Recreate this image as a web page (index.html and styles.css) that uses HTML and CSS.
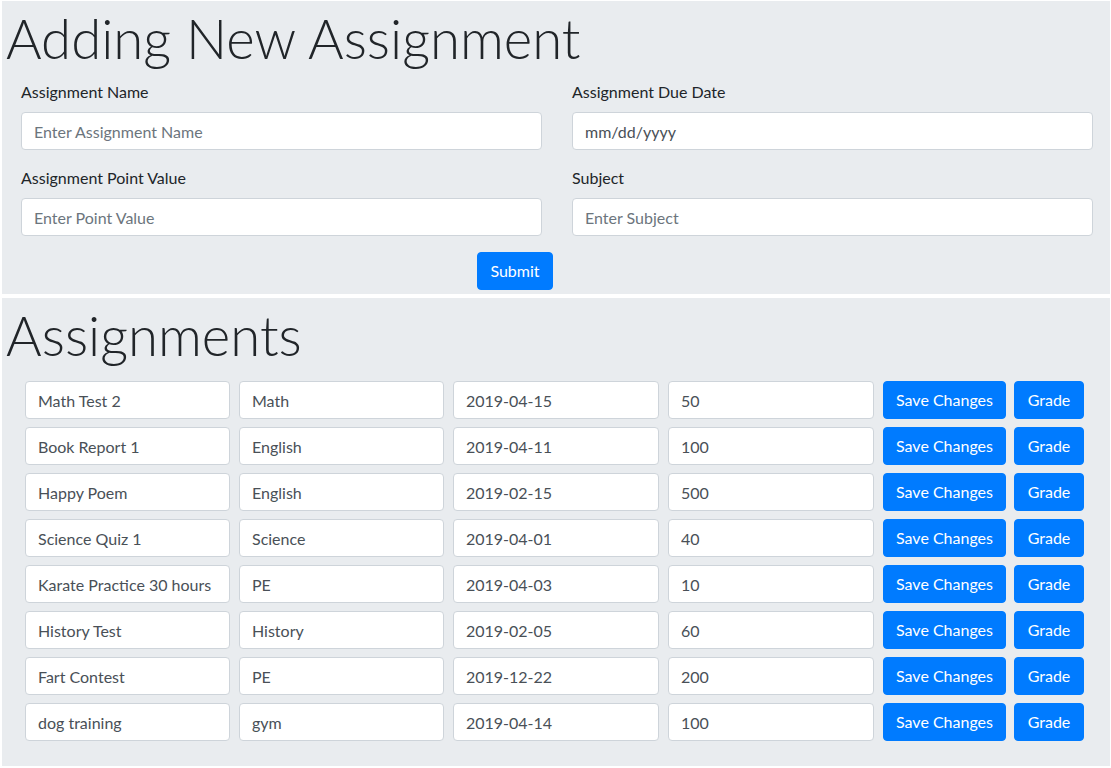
FILE: index.html
```html
<!DOCTYPE html>
<html lang="en">
<head>
<meta charset="utf-8">
<title>Assignments</title>
<link rel="stylesheet" href="styles.css">
</head>
<body>
<section class="jumbo jumbo-form">
  <h1 class="display">Adding New Assignment</h1>
  <form class="new-form">
    <div class="form-grid">
      <div class="form-group">
        <label>Assignment Name</label>
        <input class="form-control" type="text" placeholder="Enter Assignment Name">
      </div>
      <div class="form-group">
        <label>Assignment Due Date</label>
        <input class="form-control date-mask" type="text" placeholder="mm/dd/yyyy">
      </div>
      <div class="form-group">
        <label>Assignment Point Value</label>
        <input class="form-control" type="text" placeholder="Enter Point Value">
      </div>
      <div class="form-group">
        <label>Subject</label>
        <input class="form-control" type="text" placeholder="Enter Subject">
      </div>
    </div>
    <div class="submit-row">
      <button type="button" class="btn btn-submit">Submit</button>
    </div>
  </form>
</section>

<section class="jumbo jumbo-list">
  <h1 class="display">Assignments</h1>
  <div class="list">
    <div class="row">
      <input class="form-control" value="Math Test 2"><input class="form-control" value="Math"><input class="form-control" value="2019-04-15"><input class="form-control" value="50">
      <button class="btn btn-save">Save Changes</button><button class="btn btn-grade">Grade</button>
    </div>
    <div class="row">
      <input class="form-control" value="Book Report 1"><input class="form-control" value="English"><input class="form-control" value="2019-04-11"><input class="form-control" value="100">
      <button class="btn btn-save">Save Changes</button><button class="btn btn-grade">Grade</button>
    </div>
    <div class="row">
      <input class="form-control" value="Happy Poem"><input class="form-control" value="English"><input class="form-control" value="2019-02-15"><input class="form-control" value="500">
      <button class="btn btn-save">Save Changes</button><button class="btn btn-grade">Grade</button>
    </div>
    <div class="row">
      <input class="form-control" value="Science Quiz 1"><input class="form-control" value="Science"><input class="form-control" value="2019-04-01"><input class="form-control" value="40">
      <button class="btn btn-save">Save Changes</button><button class="btn btn-grade">Grade</button>
    </div>
    <div class="row">
      <input class="form-control" value="Karate Practice 30 hours"><input class="form-control" value="PE"><input class="form-control" value="2019-04-03"><input class="form-control" value="10">
      <button class="btn btn-save">Save Changes</button><button class="btn btn-grade">Grade</button>
    </div>
    <div class="row">
      <input class="form-control" value="History Test"><input class="form-control" value="History"><input class="form-control" value="2019-02-05"><input class="form-control" value="60">
      <button class="btn btn-save">Save Changes</button><button class="btn btn-grade">Grade</button>
    </div>
    <div class="row">
      <input class="form-control" value="Fart Contest"><input class="form-control" value="PE"><input class="form-control" value="2019-12-22"><input class="form-control" value="200">
      <button class="btn btn-save">Save Changes</button><button class="btn btn-grade">Grade</button>
    </div>
    <div class="row">
      <input class="form-control" value="dog training"><input class="form-control" value="gym"><input class="form-control" value="2019-04-14"><input class="form-control" value="100">
      <button class="btn btn-save">Save Changes</button><button class="btn btn-grade">Grade</button>
    </div>
  </div>
</section>
</body>
</html>
```
FILE: styles.css
```css
* { box-sizing: border-box; }

html, body {
  margin: 0;
  padding: 0;
  background: #ffffff;
}

body {
  font-family: "Lato", "Liberation Sans", sans-serif;
  font-size: 16px;
  line-height: 24px;
  color: #212529;
}

.jumbo {
  background: #e9ecef;
  margin-left: 2px;
  margin-right: 1px;
  padding: 4px 2px 4px 6px;
}

.jumbo-form {
  margin-top: 1px;
}

.jumbo-list {
  margin-top: 4px;
  padding-bottom: 25px;
}

.display {
  font-family: "Lato", "Liberation Sans", sans-serif;
  font-weight: 300;
  font-size: 54.5px;
  line-height: 67px;
  margin: 0 0 8px -2px;
  color: #212529;
}

.new-form {
  padding: 0 15px 0 13px;
}

.form-grid {
  display: grid;
  grid-template-columns: 1fr 1fr;
  column-gap: 30px;
}

.form-group {
  display: flex;
  flex-direction: column;
  margin-bottom: 16px;
}

.form-group label {
  display: block;
  margin-bottom: 8px;
  line-height: 24px;
}

.form-control {
  display: block;
  width: 100%;
  height: 38px;
  padding: 6px 12px;
  font-family: "Lato", "Liberation Sans", sans-serif;
  font-size: 16px;
  line-height: 24px;
  color: #495057;
  background: #ffffff;
  border: 1px solid #ced4da;
  border-radius: 4px;
  outline: none;
}

.form-control::placeholder {
  color: #6c757d;
  opacity: 1;
}

.date-mask::placeholder {
  color: #495057;
}

.submit-row {
  display: flex;
  padding-left: 456px;
}

.btn {
  display: inline-block;
  height: 38px;
  padding: 6px 12px;
  font-family: "Lato", "Liberation Sans", sans-serif;
  font-size: 16px;
  line-height: 24px;
  color: #ffffff;
  background: #007bff;
  border: 1px solid #007bff;
  border-radius: 4px;
  text-align: center;
  white-space: nowrap;
  cursor: pointer;
}

.btn-submit { width: 76px; }

.list {
  display: flex;
  flex-direction: column;
  gap: 8px;
  padding: 4px 0 0 17px;
}

.row {
  display: grid;
  grid-template-columns: 205px 205px 206px 206px 123px 69px;
  column-gap: 9px;
}

.btn-grade {
  margin-left: -1px;
}
```
